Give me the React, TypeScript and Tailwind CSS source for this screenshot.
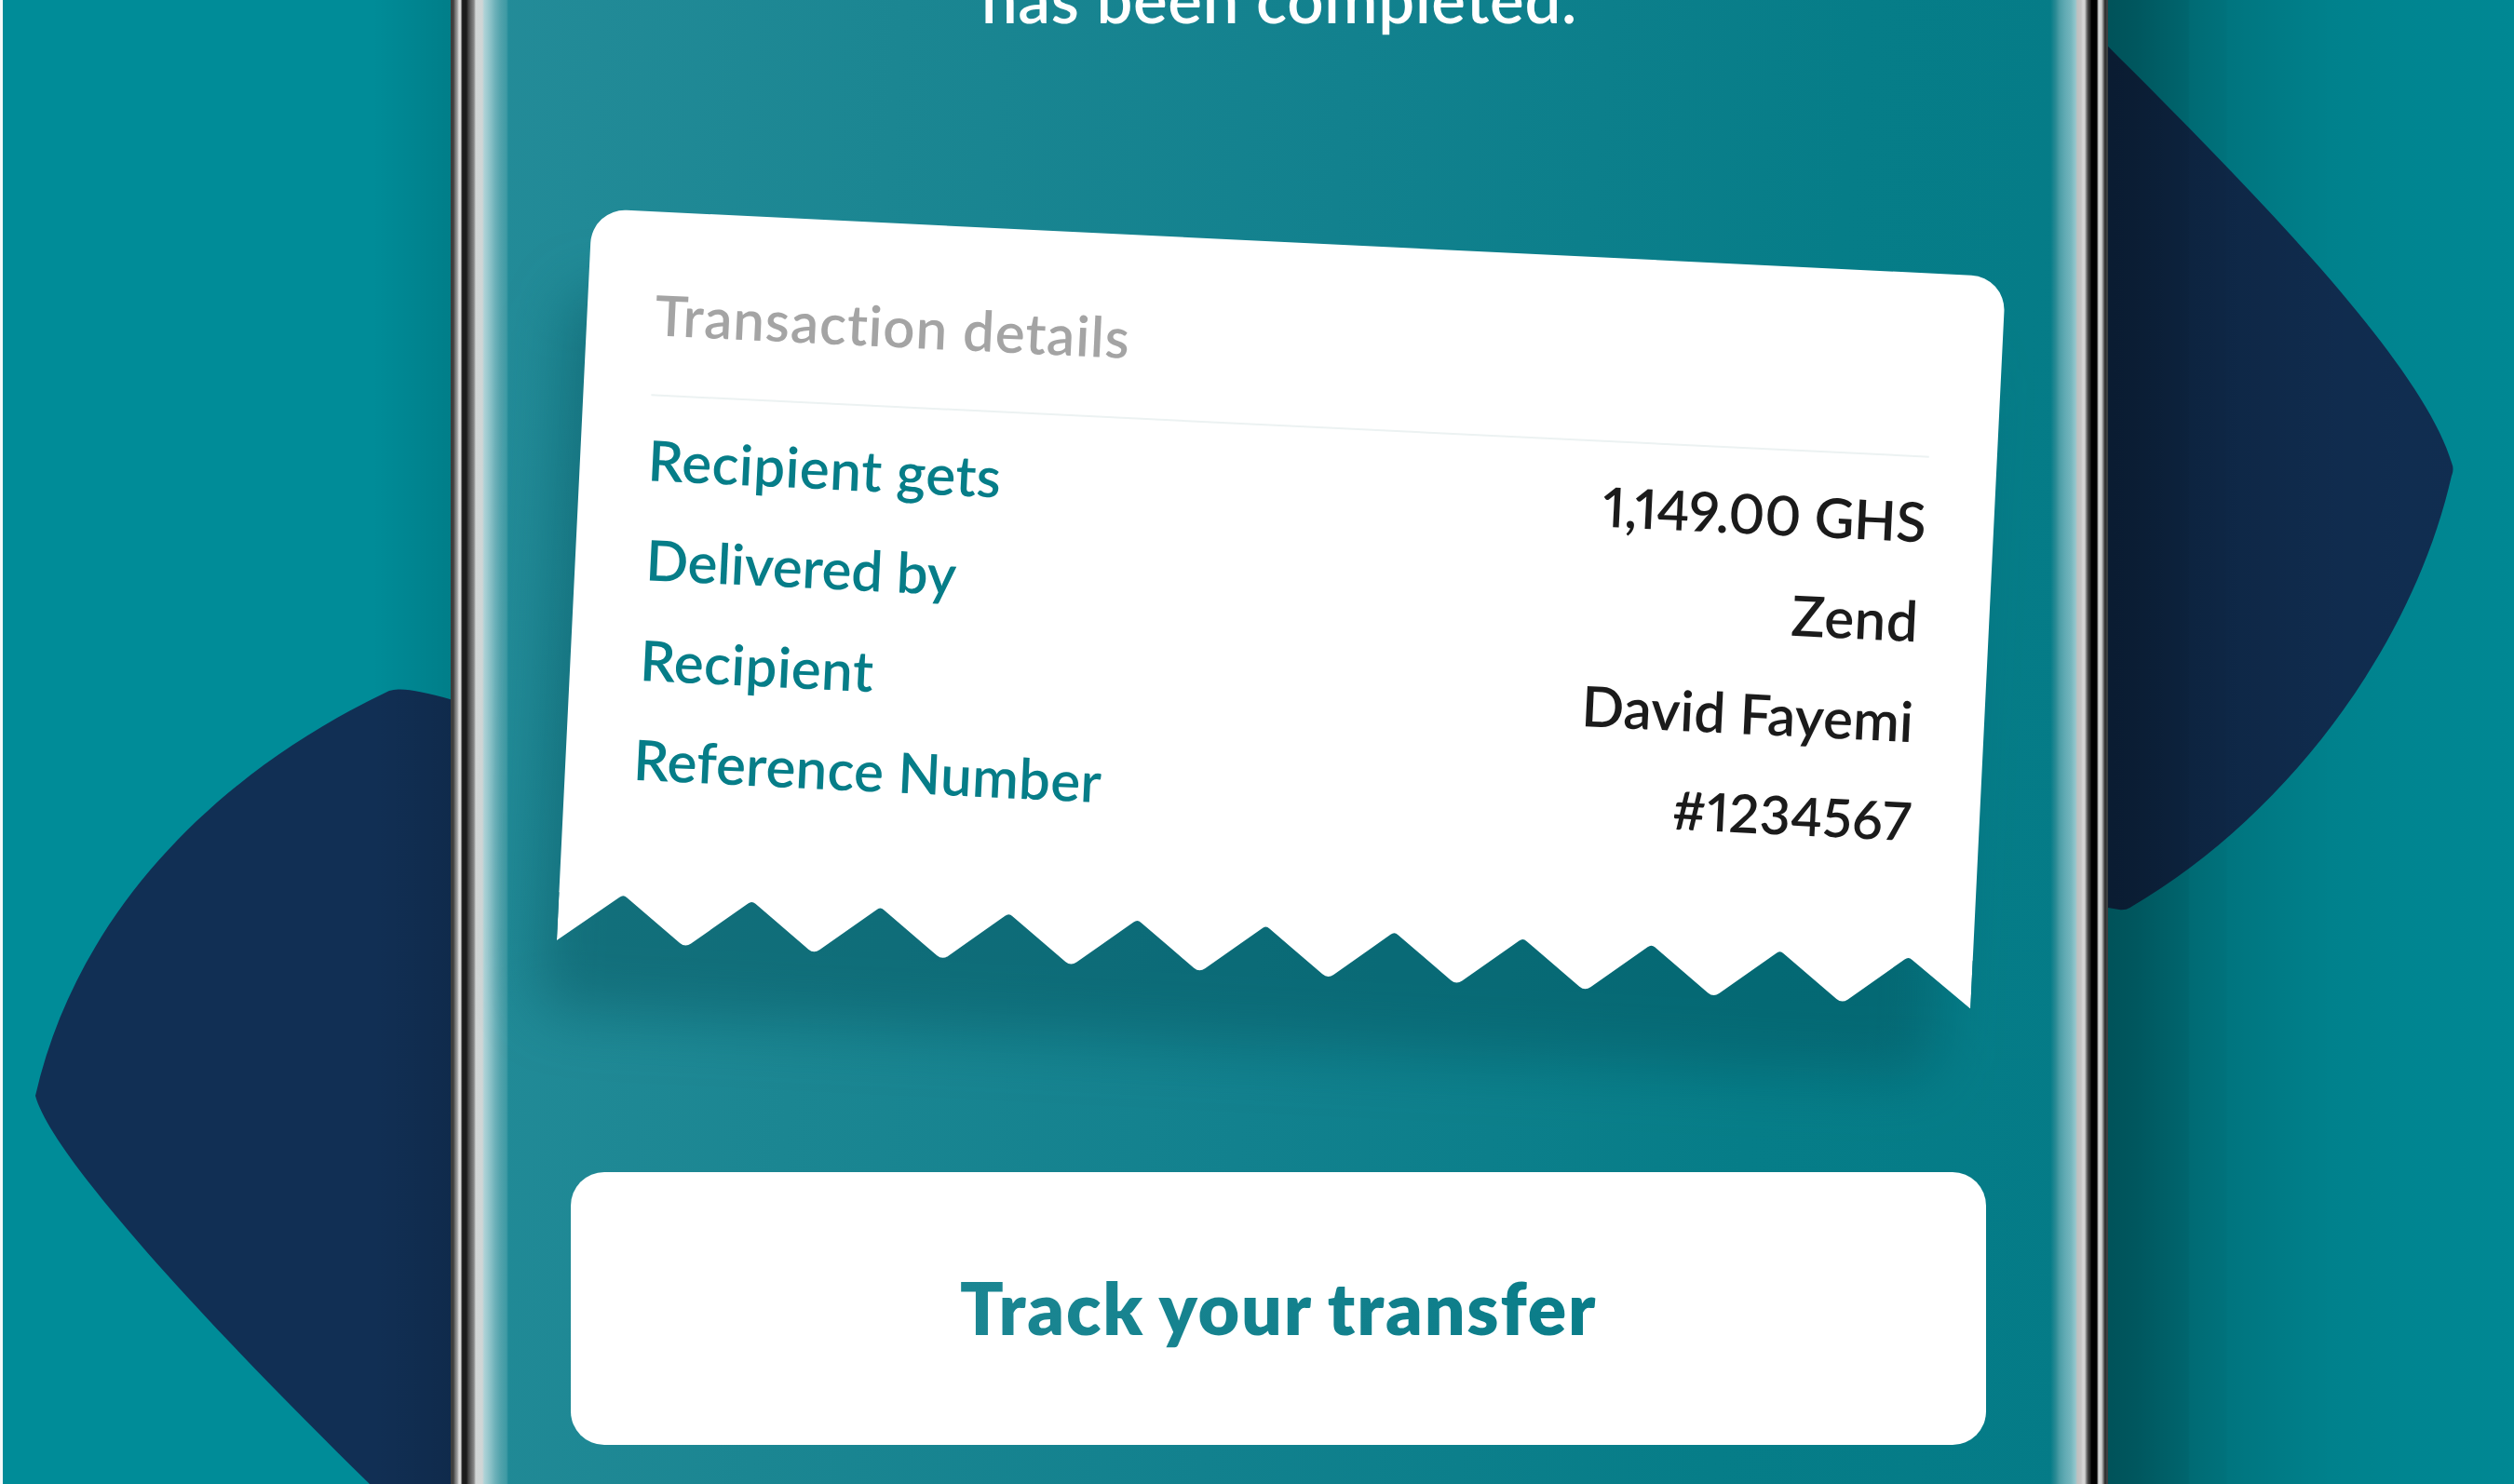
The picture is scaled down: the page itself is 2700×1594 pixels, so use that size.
const TOOTH_COUNT = 11;
const TOOTH_WIDTH = 138.2;
const RECEIPT_WIDTH = TOOTH_COUNT * TOOTH_WIDTH;

const details = [
  { label: "Recipient gets", value: "1,149.00 GHS", labelClass: "tracking-[0.5px]", valueClass: "text-[59px] tracking-[-0.2px]" },
  { label: "Delivered by", value: "Zend", labelClass: "pl-[3px] tracking-[-0.1px]", valueClass: "pr-[3px] tracking-[0.5px]" },
  { label: "Recipient", value: "David Fayemi", labelClass: "pl-[2px] tracking-[0.4px]", valueClass: "pr-[3px] tracking-[0.1px]" },
  { label: "Reference Number", value: "#1234567", labelClass: "tracking-[0.3px]", valueClass: "text-[57px] tracking-[0.5px]" },
];

function tornEdgePath() {
  let d = `M0 0 V53`;
  for (let i = 0; i < TOOTH_COUNT; i++) {
    const start = i * TOOTH_WIDTH;
    const peak = start + TOOTH_WIDTH / 2;
    const end = start + TOOTH_WIDTH;
    d += ` L${peak - 4} 3.5 Q${peak} 0 ${peak + 4} 3.5`;
    if (i < TOOTH_COUNT - 1) {
      d += ` L${end - 6} 49.5 Q${end} 54 ${end + 6} 49.5`;
    } else {
      d += ` L${end} 53`;
    }
  }
  return `${d} V0 Z`;
}

function LeftBackdrop() {
  return (
    <div className="relative w-[484px] shrink-0 overflow-hidden border-l-[3px] border-[#f4fafa] bg-[#008c98]">
      <svg className="block h-[1594px] w-[484px]" viewBox="3 0 484 1594" fill="#112f54">
        <path d="M490 753 Q450 741 430 740.5 Q424 740 418 742 C240 826 84 975 38 1177 C58 1250 260 1460 397 1594 H490 Z" />
      </svg>
      <div className="absolute inset-y-0 right-0 w-[84px] bg-linear-to-l from-black/10 to-black/0" />
    </div>
  );
}

function RightBackdrop() {
  return (
    <div className="relative flex-1 overflow-hidden bg-[#008c98]">
      <svg className="block h-[1594px] w-[436px]" viewBox="2264 0 436 1594" fill="#112f54">
        <path d="M2264 49.7 C2400 186 2600 385 2633 497 Q2636 504 2633 511 C2590 700 2450 880 2289 974 Q2283 978 2276 977 L2264 975 Z" />
      </svg>
      <div className="absolute inset-0 bg-[linear-gradient(90deg,rgba(0,0,0,0.41)_0px,rgba(0,0,0,0.38)_30px,rgba(0,0,0,0.28)_86px,rgba(0,0,0,0.24)_88px,rgba(0,0,0,0.19)_126px,rgba(0,0,0,0.17)_128px,rgba(0,0,0,0.12)_185px,rgba(0,0,0,0.08)_240px,rgba(0,0,0,0.05)_320px,rgba(0,0,0,0.03)_436px)]" />
    </div>
  );
}

function Receipt() {
  return (
    <section className="relative ml-[151.8px] w-[1520px] origin-top-left rotate-[2.77deg]">
      <div className="absolute top-[90px] right-[36px] bottom-[-76px] left-[-20px] rounded-[30px] bg-[#02505c]/45 blur-[32px]" />
      <div className="relative h-[735px] rounded-t-[37px] bg-white px-[73px] pt-[74px]">
        <h2 className="text-[60px] leading-[72px] font-semibold tracking-[0.95px] text-[#a4a4a4]">
          Transaction details
        </h2>
        <dl className="mt-[50px] border-t-2 border-[#ecf2f2] pt-[15px]">
          {details.map((row) => (
            <div key={row.label} className="flex justify-between text-[60px] leading-[107.4px] font-semibold">
              <dt className={`text-[#067d88] ${row.labelClass}`}>{row.label}</dt>
              <dd className={`text-[#1b1b1b] proportional-nums ${row.valueClass}`}>{row.value}</dd>
            </div>
          ))}
        </dl>
      </div>
      <svg
        className="relative -mt-px block h-[53px] w-[1520px]"
        viewBox={`0 0 ${RECEIPT_WIDTH} 53`}
        preserveAspectRatio="none"
        fill="#fff"
      >
        <path d={tornEdgePath()} />
      </svg>
    </section>
  );
}

function Phone() {
  return (
    <div className="flex w-[1780px] shrink-0 bg-[linear-gradient(96deg,#248c99_0%,#1b8692_25%,#12818e_50%,#067d88_78%,#047b87_100%)]">
      <div className="-mr-[62px] w-[62px] shrink-0 bg-[linear-gradient(90deg,#3c3c3c_0px,#404040_3px,#777_5px,#999_7px,#dadada_9px,#d6d6d6_11px,#333_12px,#1c1c1c_13px,#1c1c1c_17px,#444_19px,#666_22px,#888_25px,#d2d6d6_27px,#cfd5d5_34px,#aed3d7_36px,#8fc3c9_42px,#6bb0b8_48px,#50a2ab_54px,#3f9aa4_60px,#3f9aa400_62px)]" />
      <main className="flex w-[1780px] shrink-0 flex-col">
        <p className="mt-[-43px] h-[83px] text-center text-[69px] leading-[83px] font-semibold tracking-[0.7px] text-white">
          has been completed.
        </p>
        <div className="mt-[184.3px]">
          <Receipt />
        </div>
        <button className="mt-[248px] ml-[129px] h-[293px] w-[1520px] rounded-[36px] bg-white pb-[2px] text-[77px] font-extrabold tracking-[1.8px] [word-spacing:-2px] text-[#12818e]">
          <span className="bg-linear-to-r from-[#1b8692] to-[#0a7d89] bg-clip-text text-transparent">
            Track your transfer
          </span>
        </button>
      </main>
      <div className="-ml-[62px] w-[62px] shrink-0 bg-[linear-gradient(90deg,#2c8b9500_0px,#2c8b95_6px,#4c9da6_10px,#62abb4_16px,#74b5bd_22px,#93c6cc_27px,#c0bfbf_29px,#c6c5c5_33px,#d6d6d6_35px,#d2d2d2_37px,#777_39px,#3a3a3a_41px,#222_43px,#000_44px,#000_50px,#888_51px,#d5d8d8_52px,#ccc_55px,#777_57px,#222_59px,#3c3f40_60px,#3c3f40_62px)]" />
    </div>
  );
}

export default function App() {
  return (
    <div className="flex h-[1594px] w-[2700px] overflow-hidden font-[Lato,sans-serif]">
      <LeftBackdrop />
      <Phone />
      <RightBackdrop />
    </div>
  );
}
